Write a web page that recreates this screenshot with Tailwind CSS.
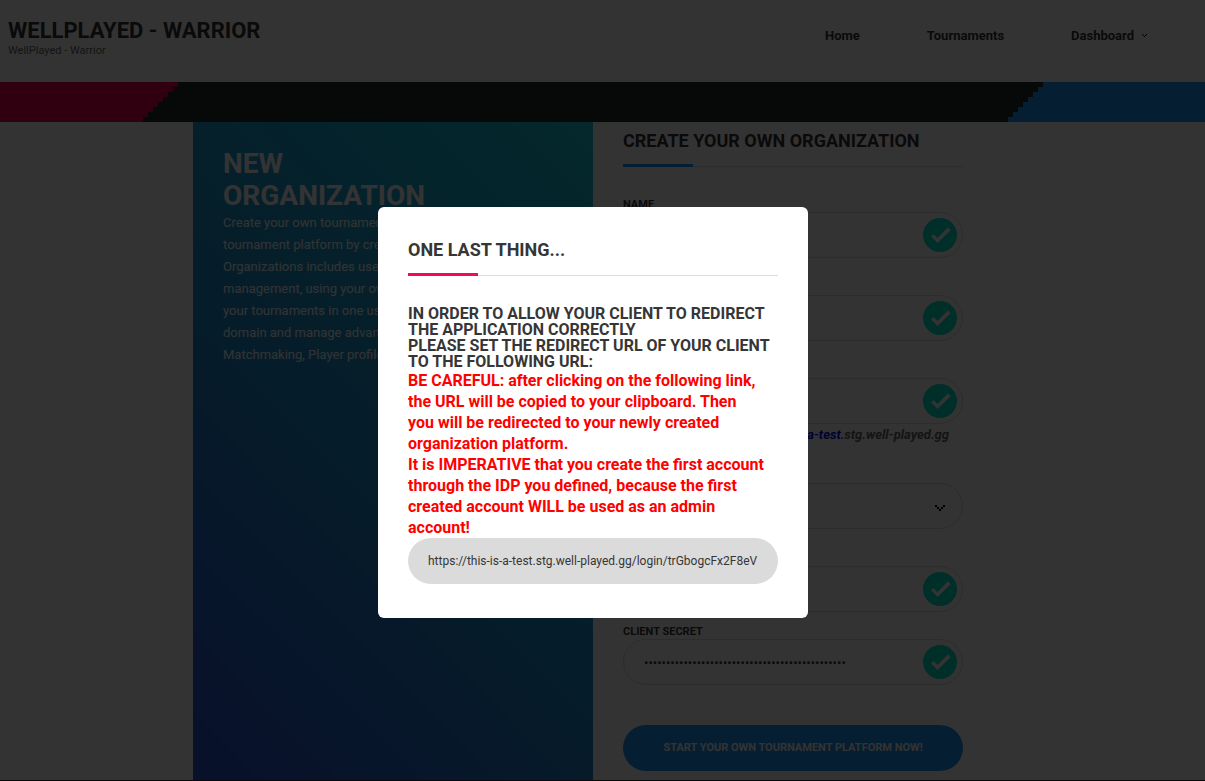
<!DOCTYPE html>
<html lang="en">
<head>
    <meta charset="UTF-8">
    <meta name="viewport" content="width=device-width, initial-scale=1.0">
    <title>WellPlayed - Warrior</title>
    <script src="https://cdn.jsdelivr.net/npm/@tailwindcss/browser@4"></script>
</head>
<body class="bg-white font-[Roboto,sans-serif] text-[#363636]">
    <!-- Header -->
    <header class="flex justify-between h-[82px] pl-2 pr-[58px]">
        <div class="pt-[17px]">
            <h1 class="text-[22px] leading-7 font-bold uppercase">WellPlayed - Warrior</h1>
            <p class="text-[11px] leading-3 text-[#666]">WellPlayed - Warrior</p>
        </div>
        <nav class="flex gap-[67px] pt-[26px] text-[13px] leading-5 font-bold">
            <a href="#">Home</a>
            <a href="#">Tournaments</a>
            <a href="#" class="flex">Dashboard
                <svg class="w-[5px] h-[3px] ml-2 mt-2" viewBox="0 0 5 3" shape-rendering="crispEdges"><path d="M0 0h1v1H0zM1 1h1v1H1zM2 2h1v1H2zM3 1h1v1H3zM4 0h1v1H4z" fill="#000"/></svg>
            </a>
        </nav>
    </header>

    <!-- Pixel ribbon -->
    <div class="flex h-10 bg-[#1f2d2a]">
        <div class="w-[143px] bg-[#f30050]"></div>
        <svg class="w-[35px] h-10" viewBox="0 0 35 40" shape-rendering="crispEdges"><path d="M0 0h35v5h-5v5h-5v5h-5v5h-5v5h-5v5H5v5H0z" fill="#f30050"/></svg>
        <div class="flex-1"></div>
        <svg class="w-[35px] h-10" viewBox="0 0 35 40" shape-rendering="crispEdges"><path d="M35 40H0v-5h5v-5h5v-5h5v-5h5v-5h5v-5h5V5h5z" fill="#1c95f3"/></svg>
        <div class="w-[162px] bg-[#1c95f3]"></div>
    </div>

    <!-- Organization form -->
    <main class="flex justify-center pr-[19px]">
        <section class="w-[400px] p-[30px] pt-[26px] text-white bg-linear-[45deg,#2d50d2,#1c8cd2_45%,#14c8d7]">
            <h2 class="text-[28px] leading-8 font-bold uppercase">New<br>Organization</h2>
            <p class="text-[13px] leading-[22px]">
                Create your own tournaments and your own<br>
                tournament platform by creating your own.<br>
                Organizations includes users and teams<br>
                management, using your own rules for all<br>
                your tournaments in one user-friendly<br>
                domain and manage advanced features:<br>
                Matchmaking, Player profiles and more
            </p>
        </section>
        <form class="w-[400px] px-[30px] pb-[9px]">
            <h2 class="pt-px text-[18px] leading-9 font-bold uppercase whitespace-nowrap">Create your own organization</h2>
            <div class="h-2 border-b border-[#ddd] flex items-end">
                <div class="w-[70px] h-[3px] -mb-px bg-[#1c95f3]"></div>
            </div>
            <div class="pt-[30px]">
                <div class="relative">
                    <label for="name" class="block h-[15px] text-[11px] leading-4 font-bold uppercase">Name</label>
                    <input id="name" type="text" value="This is a test" class="block w-full h-[46px] rounded-full border border-[#dbdbdb] px-5 text-[13px]">
                    <svg class="absolute right-[6px] bottom-[6px] w-[34px] h-[34px]" viewBox="0 0 34 34"><circle cx="17" cy="17" r="17" fill="#00e4c8"/><path d="M10.5 16l4 4L25 9.3l2.7 2.9L14.5 25 8 18.5z" fill="#fff"/></svg>
                </div>
                <div class="relative pt-[22px]">
                    <label for="description" class="block h-[15px] text-[11px] leading-4 font-bold uppercase">Description</label>
                    <input id="description" type="text" value="This is a test" class="block w-full h-[46px] rounded-full border border-[#dbdbdb] px-5 text-[13px]">
                    <svg class="absolute right-[6px] bottom-[6px] w-[34px] h-[34px]" viewBox="0 0 34 34"><circle cx="17" cy="17" r="17" fill="#00e4c8"/><path d="M10.5 16l4 4L25 9.3l2.7 2.9L14.5 25 8 18.5z" fill="#fff"/></svg>
                </div>
                <div class="relative pt-[22px]">
                    <label for="subdomain" class="block h-[15px] text-[11px] leading-4 font-bold uppercase">Subdomain</label>
                    <input id="subdomain" type="text" value="this-is-a-test" class="block w-full h-[46px] rounded-full border border-[#dbdbdb] px-5 text-[13px]">
                    <svg class="absolute right-[6px] bottom-[6px] w-[34px] h-[34px]" viewBox="0 0 34 34"><circle cx="17" cy="17" r="17" fill="#00e4c8"/><path d="M10.5 16l4 4L25 9.3l2.7 2.9L14.5 25 8 18.5z" fill="#fff"/></svg>
                </div>
                <p class="h-[22px] pr-[14px] text-right text-[13px] leading-[22px] font-bold italic text-[#666]">Your URL: <span class="text-[#00f]">this-is-a-test</span>.stg.well-played.gg</p>
                <div class="relative pt-[22px]">
                    <label for="provider" class="block h-[15px] text-[11px] leading-4 font-bold uppercase">Provider</label>
                    <select id="provider" class="block w-full h-[46px] appearance-none rounded-full border border-[#dbdbdb] px-5 text-[13px]">
                        <option>OpenID</option>
                    </select>
                    <svg class="absolute right-[18px] bottom-[18px] w-[10px] h-[6px]" viewBox="0 0 10 6" shape-rendering="crispEdges"><path d="M0 0h2v2H0zM2 2h2v2H2zM4 4h2v2H4zM6 2h2v2H6zM8 0h2v2H8z" fill="#000"/></svg>
                </div>
                <div class="relative pt-[22px]">
                    <label for="client" class="block h-[15px] text-[11px] leading-4 font-bold uppercase">Client ID</label>
                    <input id="client" type="text" value="warrior" class="block w-full h-[46px] rounded-full border border-[#dbdbdb] px-5 text-[13px]">
                    <svg class="absolute right-[6px] bottom-[6px] w-[34px] h-[34px]" viewBox="0 0 34 34"><circle cx="17" cy="17" r="17" fill="#00e4c8"/><path d="M10.5 16l4 4L25 9.3l2.7 2.9L14.5 25 8 18.5z" fill="#fff"/></svg>
                </div>
                <div class="relative pt-3">
                    <label for="secret" class="block h-[15px] text-[11px] leading-4 font-bold uppercase">Client secret</label>
                    <input id="secret" type="password" value="0123456789012345678901234567890123456789012345" class="block w-full h-[46px] rounded-full border border-[#dbdbdb] px-5 text-[13px]">
                    <svg class="absolute right-[6px] bottom-[6px] w-[34px] h-[34px]" viewBox="0 0 34 34"><circle cx="17" cy="17" r="17" fill="#00e4c8"/><path d="M10.5 16l4 4L25 9.3l2.7 2.9L14.5 25 8 18.5z" fill="#fff"/></svg>
                </div>
                <button type="button" class="block w-full h-[46px] mt-10 rounded-full bg-[#1c95f3] text-white text-[11px] font-bold uppercase">Start your own tournament platform now!</button>
            </div>
        </form>
    </main>
    <footer class="h-px bg-[#1f2d2a]"></footer>

    <!-- Redirect modal -->
    <div class="fixed inset-0 flex items-start justify-center pt-[207px] pr-[19px] bg-black/80">
        <div role="dialog" aria-labelledby="modal-title" class="w-[430px] rounded-md bg-white px-[30px] pt-6 pb-[34px]">
            <h2 id="modal-title" class="pt-px text-[18px] leading-9 font-bold uppercase">One last thing...</h2>
            <div class="h-2 border-b border-[#ddd] flex items-end">
                <div class="w-[70px] h-[3px] -mb-px bg-[#f30a5c]"></div>
            </div>
            <p class="pt-[30px] text-[16px] leading-4 font-bold uppercase whitespace-nowrap">
                In order to allow your client to redirect<br>
                the application correctly<br>
                please set the redirect url of your client<br>
                to the following url:
            </p>
            <p class="text-[16px] leading-[21px] font-bold text-[#f00] whitespace-nowrap">
                BE CAREFUL: after clicking on the following link,<br>
                the URL will be copied to your clipboard. Then<br>
                you will be redirected to your newly created<br>
                organization platform.<br>
                It is IMPERATIVE that you create the first account<br>
                through the IDP you defined, because the first<br>
                created account WILL be used as an admin<br>
                account!
            </p>
            <input type="text" readonly aria-label="Redirect URL" value="https://this-is-a-test.stg.well-played.gg/login/trGbogcFx2F8eV" class="block w-full h-[46px] rounded-full bg-[#dbdbdb] px-5 text-xs">
        </div>
    </div>
</body>
</html>
